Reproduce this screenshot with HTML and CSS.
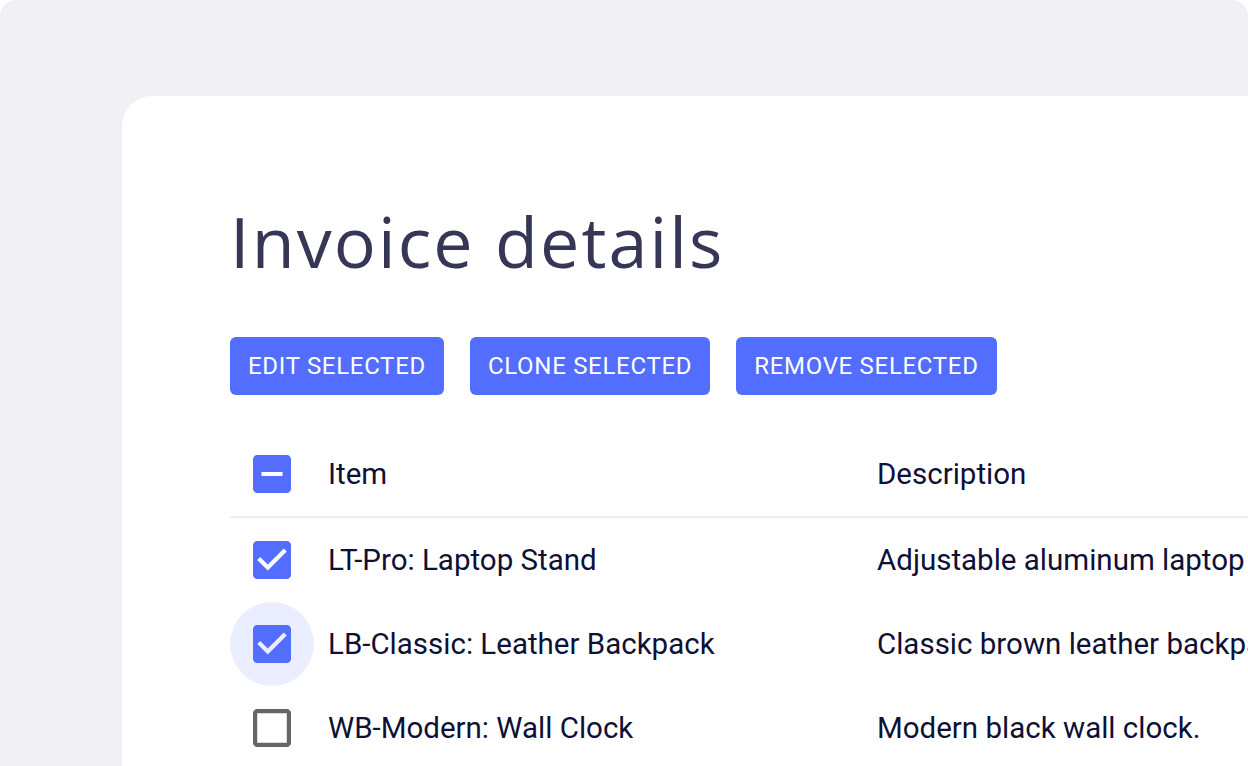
FILE: index.html
```html
<!DOCTYPE html>
<html lang="en">
<head>
  <meta charset="UTF-8" />
  <meta name="viewport" content="width=device-width, initial-scale=1.0" />
  <title>Invoice details</title>
  <link rel="stylesheet" href="styles.css">
</head>

<body>
  <div class="frame">
    <div class="card">
      <h1 class="title">Invoice details</h1>

      <div class="actions">
        <button class="btn">Edit selected</button>
        <button class="btn">Clone selected</button>
        <button class="btn">Remove selected</button>
      </div>

      <div class="table">
        <div class="row head">
          <div class="check-cell">
            <span class="check">
              <svg viewBox="3 3 18 18" class="box on"><path d="M19 3H5c-1.1 0-2 .9-2 2v14c0 1.1.9 2 2 2h14c1.1 0 2-.9 2-2V5c0-1.1-.9-2-2-2zm-2 10H7v-2h10v2z"/></svg>
            </span>
          </div>
          <div class="col-item">Item</div>
          <div class="col-desc">Description</div>
        </div>

        <div class="row">
          <div class="check-cell">
            <span class="check">
              <svg viewBox="3 3 18 18" class="box on"><path d="M19 3H5c-1.11 0-2 .9-2 2v14c0 1.1.89 2 2 2h14c1.11 0 2-.9 2-2V5c0-1.1-.89-2-2-2zm-9 14l-5-5 1.41-1.41L10 14.17l7.59-7.59L19 8l-9 9z"/></svg>
            </span>
          </div>
          <div class="col-item">LT-Pro: Laptop Stand</div>
          <div class="col-desc">Adjustable aluminum laptop stand for better ergonomics.</div>
        </div>

        <div class="row">
          <div class="check-cell">
            <span class="check hover">
              <svg viewBox="3 3 18 18" class="box on"><path d="M19 3H5c-1.11 0-2 .9-2 2v14c0 1.1.89 2 2 2h14c1.11 0 2-.9 2-2V5c0-1.1-.89-2-2-2zm-9 14l-5-5 1.41-1.41L10 14.17l7.59-7.59L19 8l-9 9z"/></svg>
            </span>
          </div>
          <div class="col-item">LB-Classic: Leather Backpack</div>
          <div class="col-desc">Classic brown leather backpack with padded sleeve.</div>
        </div>

        <div class="row">
          <div class="check-cell">
            <span class="check">
              <svg viewBox="3 3 18 18" class="box off"><path d="M19 5v14H5V5h14m0-2H5c-1.1 0-2 .9-2 2v14c0 1.1.9 2 2 2h14c1.1 0 2-.9 2-2V5c0-1.1-.9-2-2-2z"/></svg>
            </span>
          </div>
          <div class="col-item">WB-Modern: Wall Clock</div>
          <div class="col-desc">Modern black wall clock.</div>
        </div>
      </div>
    </div>
  </div>
</body>
</html>
```

FILE: styles.css
```css
body {
  margin: 0;
  background: #fff;
  font-family: Roboto, "Liberation Sans", sans-serif;
  overflow: hidden;
}
.frame {
  height: 766px;
  background: #f0f0f5;
  border-radius: 16px 16px 0 0;
  padding: 96px 0 0 122px;
  box-sizing: border-box;
  overflow: hidden;
}
.card {
  background: #fff;
  border-radius: 30px 0 0 0;
  height: 100%;
  padding: 0 0 0 108px;
  white-space: nowrap;
}
.title {
  margin: 0;
  padding-top: 100px;
  font-family: "Open Sans", Lato, sans-serif;
  font-weight: 400;
  font-size: 70px;
  line-height: 90px;
  letter-spacing: 2.1px;
  color: #363657;
}
.actions {
  display: flex;
  gap: 26px;
  margin-top: 51px;
}
.btn {
  height: 58px;
  padding: 0 18px;
  background: #536dfe;
  color: #fff;
  border: none;
  border-radius: 6px;
  font-family: Roboto, sans-serif;
  font-size: 24px;
  text-transform: uppercase;
  letter-spacing: 0.7px;
}
.table {
  margin-top: 37px;
  width: 1400px;
}
.row {
  display: flex;
  align-items: center;
  height: 84px;
  font-size: 29.5px;
  color: #0f1035;
}
.row.head {
  border-bottom: 2px solid #eeeef3;
}
.check-cell {
  width: 98px;
  flex: none;
}
.check {
  display: flex;
  align-items: center;
  justify-content: center;
  width: 84px;
  height: 84px;
  border-radius: 50%;
}
.check.hover {
  background: #ebeefe;
}
.box {
  width: 38px;
  height: 38px;
}
.box.on {
  fill: #536dfe;
}
.box.off {
  fill: #666;
}
.col-item {
  width: 549px;
  flex: none;
}
.col-desc {
  flex: none;
}
```
